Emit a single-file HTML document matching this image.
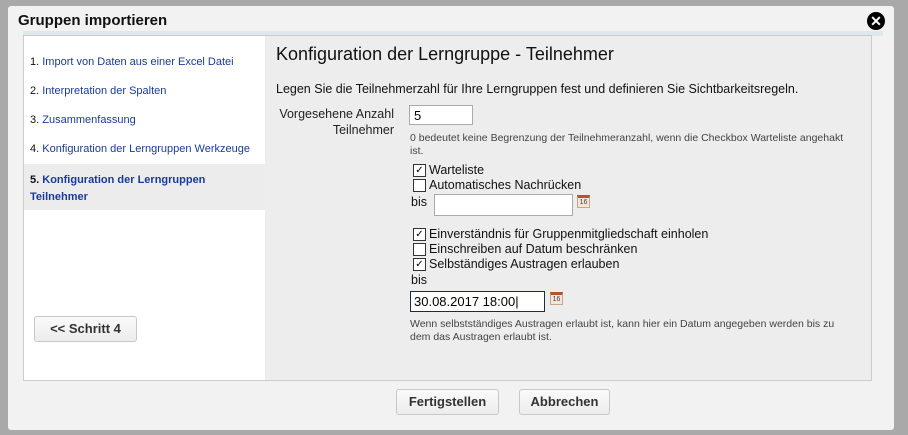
<!DOCTYPE html>
<html><head><meta charset="utf-8"><style>
body{margin:0;width:908px;height:435px;background:#a9a9a9;font-family:"Liberation Sans",Arial,sans-serif;position:relative;overflow:hidden}
.dlg{position:absolute;left:8px;top:6px;width:886px;height:424px;background:#f2f2f2;border-radius:3px}
.title{position:absolute;left:10px;top:6px;font-size:15px;font-weight:bold;color:#111}
.close{position:absolute;left:859px;top:6px;width:18px;height:18px;border-radius:50%;background:#000;color:#fff;font-size:14px;font-weight:bold;line-height:18px;text-align:center}
.strip{position:absolute;left:15px;top:25px;width:860px;height:5px;background:#dde8ec}
.panel{position:absolute;left:15px;top:29px;width:847px;height:344px;background:#ededed;border:1px solid #ccc}
.nav{position:absolute;left:0;top:0;width:241px;height:344px;background:#fff}
.nav .it{position:absolute;left:6px;font-size:11px;color:#1a3a9a}
.nav span{color:#111}
.sel{position:absolute;left:0;top:128px;width:241px;height:46px;background:#ececec}
.btn{position:absolute;border:1px solid #c8c8c8;border-radius:3px;background:linear-gradient(#fafafa,#ececec);font-weight:bold;font-size:13px;color:#333;text-align:center;line-height:24px;height:24px}
.r{position:absolute;color:#111}
.cb{position:absolute;width:11px;height:11px;border:1px solid #333;background:#fff;font-size:10px;line-height:11px;text-align:center}
.inp{position:absolute;background:#fff;border:1px solid #aaa}
.cal{position:absolute;width:13px;height:13px;background:#f1e6d8;border:1px solid #c9a585;border-top:3px solid #b0562e;font-size:7px;line-height:10px;text-align:center;color:#444;box-sizing:border-box}
.small{position:absolute;font-size:10.5px;color:#444;line-height:13px}
</style></head><body>
<div class="dlg">
<div class="title">Gruppen importieren</div>
<div class="close">✕</div>
<div class="strip"></div>
<div class="panel">
 <div class="nav">
  <div class="it" style="top:20px"><span>1.</span> Import von Daten aus einer Excel Datei</div>
  <div class="it" style="top:49px"><span>2.</span> Interpretation der Spalten</div>
  <div class="it" style="top:78px"><span>3.</span> Zusammenfassung</div>
  <div class="it" style="top:107px"><span>4.</span> Konfiguration der Lerngruppen Werkzeuge</div>
  <div class="sel"></div>
  <div class="it" style="top:136px;font-weight:bold;line-height:17px;left:6px"><span>5.</span> Konfiguration der Lerngruppen<br>Teilnehmer</div>
  <div class="btn" style="left:10px;top:280px;width:101px">&lt;&lt; Schritt 4</div>
 </div>
 <div class="r" style="left:252px;top:8px;font-size:18px">Konfiguration der Lerngruppe - Teilnehmer</div>
 <div class="r" style="left:252px;top:46px;font-size:12.5px">Legen Sie die Teilnehmerzahl für Ihre Lerngruppen fest und definieren Sie Sichtbarkeitsregeln.</div>
 <div class="r" style="left:250px;top:70px;width:120px;text-align:right;font-size:12.5px;line-height:16px;color:#222">Vorgesehene Anzahl<br>Teilnehmer</div>
 <div class="inp" style="left:385px;top:69px;height:20px;font-size:13px;line-height:20px;padding-left:4px;box-sizing:border-box;width:64px">5</div>
 <div class="small" style="left:386px;top:96px">0 bedeutet keine Begrenzung der Teilnehmeranzahl, wenn die Checkbox Warteliste angehakt<br>ist.</div>
 <div class="cb" style="left:389px;top:128px">✓</div><div class="r" style="left:405px;top:127px;font-size:12.5px">Warteliste</div>
 <div class="cb" style="left:389px;top:143px"></div><div class="r" style="left:405px;top:142px;font-size:12.5px">Automatisches Nachrücken</div>
 <div class="r" style="left:387px;top:159px;font-size:12.5px">bis</div>
 <div class="inp" style="left:410px;top:158px;width:137px;height:20px"></div>
 <div class="cal" style="left:553px;top:159px">16</div>
 <div class="cb" style="left:389px;top:192px">✓</div><div class="r" style="left:405px;top:191px;font-size:12.5px">Einverständnis für Gruppenmitgliedschaft einholen</div>
 <div class="cb" style="left:389px;top:207px"></div><div class="r" style="left:405px;top:206px;font-size:12.5px">Einschreiben auf Datum beschränken</div>
 <div class="cb" style="left:389px;top:222px">✓</div><div class="r" style="left:405px;top:221px;font-size:12.5px">Selbständiges Austragen erlauben</div>
 <div class="r" style="left:387px;top:237px;font-size:12.5px">bis</div>
 <div class="inp" style="left:386px;top:255px;width:130px;height:19px;border:1px solid #1c2a44;font-size:13px;line-height:19px;padding-left:3px">30.08.2017 18:00|</div>
 <div class="cal" style="left:526px;top:256px">16</div>
 <div class="small" style="left:386px;top:282px">Wenn selbstständiges Austragen erlaubt ist, kann hier ein Datum angegeben werden bis zu<br>dem das Austragen erlaubt ist.</div>
</div>
<div class="btn" style="left:388px;top:383px;width:101px">Fertigstellen</div>
<div class="btn" style="left:511px;top:383px;width:89px">Abbrechen</div>
</div>
</body></html>
